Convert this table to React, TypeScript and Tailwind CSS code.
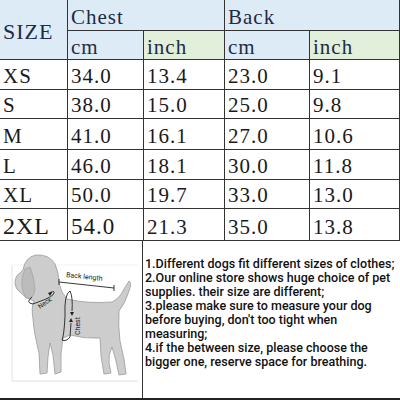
import React from 'react'

const rows = [
  { size: 'XS', c1: '34.0', c2: '13.4', b1: '23.0', b2: '9.1', h: 'h-[29px]' },
  { size: 'S', c1: '38.0', c2: '15.0', b1: '25.0', b2: '9.8', h: 'h-[28px]' },
  { size: 'M', c1: '41.0', c2: '16.1', b1: '27.0', b2: '10.6', h: 'h-[30px]' },
  { size: 'L', c1: '46.0', c2: '18.1', b1: '30.0', b2: '11.8', h: 'h-[29px]' },
  { size: 'XL', c1: '50.0', c2: '19.7', b1: '33.0', b2: '13.0', h: 'h-[28px]' },
  { size: '2XL', c1: '54.0', c2: '21.3', b1: '35.0', b2: '13.8', h: 'h-[31px]', big: true },
]

const serif = "font-['Liberation_Serif','DejaVu_Serif',serif]"

function DogFigure() {
  return (
    <svg viewBox="0 0 143 158" className="h-[158px] w-[143px]">
      {/* frame */}
      <line x1="12" y1="24" x2="12" y2="140" stroke="#e2e2e2" strokeWidth="1" />
      <line x1="12" y1="140" x2="138" y2="140" stroke="#e2e2e2" strokeWidth="1" />
      <line x1="12" y1="24" x2="138" y2="24" stroke="#f2f2f2" strokeWidth="1" />
      {/* dog body */}
      <path
        d="M15 42 Q15 35 20 32 L23 29 Q25 16 36 14 Q49 13 55 23 Q59 32 59 42 Q61 52 67 58 Q88 63 112 61 Q120 57 124 48 L129 40 Q132 42 129 50 Q125 63 119 70 Q118 85 120 100 L124 118 L126 133 L119 134 L116 120 L112 106 Q108 114 109 122 L111 132 L104 133 L101 115 L100 97 Q85 98 70 94 L63 97 Q60 112 61 131 L55 133 L53 114 L50 102 L48 116 L47 132 L40 133 L39 112 Q34 92 33 78 Q31 66 34 60 Q26 58 21 52 Q15 48 15 42 Z"
        fill="#cdcdcd"
        stroke="#9a9a9a"
        strokeWidth="0.8"
      />
      {/* ear */}
      <path d="M25 28 Q18 44 26 57 Q34 59 35 48 Q34 35 30 26 Z" fill="#bcbcbc" stroke="#9a9a9a" strokeWidth="0.6" />
      {/* dashed guide lines */}
      <path d="M58 60 L58 102" stroke="#d5d5d5" strokeWidth="0.8" strokeDasharray="2 2" fill="none" />
      <path d="M56 44 Q50 56 40 60" stroke="#d5d5d5" strokeWidth="0.8" strokeDasharray="2 2" fill="none" />
      {/* back length bracket */}
      <path d="M59 44 L59 38 M59 41 L114 47 M114 44 L114 50" stroke="#222" strokeWidth="0.9" fill="none" />
      <text x="66" y="36" fontSize="7" fill="#222" fontFamily="Roboto, Arial, sans-serif" transform="rotate(6 66 36)">
        Back length
      </text>
      {/* neck loop */}
      <path d="M32 56 Q25 62 33 63 L46 58 Q57 53 53 50" stroke="#222" strokeWidth="0.9" fill="none" />
      <path d="M48 52 L53 50 L50 55 Z" fill="#222" />
      <text x="40" y="68" fontSize="6.5" fill="#222" fontFamily="Roboto, Arial, sans-serif" transform="rotate(-35 40 68)">
        Neck
      </text>
      {/* chest loop */}
      <path d="M70 50 Q64 53 65 75 Q64 95 62 99 Q66 101 70 96 L71 82" stroke="#222" strokeWidth="0.9" fill="none" />
      <path d="M70 50 Q73 56 72 70" stroke="#222" strokeWidth="0.9" fill="none" />
      <path d="M70 71 L74 71 L72 75 Z" fill="#222" />
      <path d="M69 81 L73 81 L71 77 Z" fill="#222" />
      <text x="80" y="94" fontSize="7" fill="#222" fontFamily="Roboto, Arial, sans-serif" transform="rotate(-90 80 94)">
        Chest
      </text>
    </svg>
  )
}

export default function App() {
  const head = `flex pl-[3px] text-[21px] leading-none tracking-[1px] text-[#1f2a44] ${serif}`
  const cell = `flex items-end bg-white pl-[3px] pb-[2px] leading-none tracking-[1px] text-[#1a1a1a] ${serif}`

  return (
    <div className="h-[402px] w-[400px] bg-white">
      <div className="grid grid-cols-[67px_75px_80px_84px_89px] gap-px bg-[#333] pb-px pr-px">
        <div className={`row-span-2 flex items-center bg-[#ddebf7] pl-[3px] pt-[4px] text-[22px] leading-none tracking-[1px] text-[#1f2a44] ${serif}`}>
          SIZE
        </div>
        <div className={`${head} col-span-2 h-[30px] items-end bg-[#ddebf7] pb-[2px]`}>Chest</div>
        <div className={`${head} col-span-2 h-[30px] items-end bg-[#ddebf7] pb-[2px]`}>Back</div>
        <div className={`${head} h-[28px] items-end bg-[#ddebf7] pb-[1px]`}>cm</div>
        <div className={`${head} h-[28px] items-end bg-[#e2efda] pb-[1px]`}>inch</div>
        <div className={`${head} h-[28px] items-end bg-[#ddebf7] pb-[1px]`}>cm</div>
        <div className={`${head} h-[28px] items-end bg-[#e2efda] pb-[1px]`}>inch</div>
        {rows.map((r) => (
          <React.Fragment key={r.size}>
            <div className={`${cell} ${r.h} ${r.big ? 'text-[24px]' : 'text-[21px]'}`}>{r.size}</div>
            <div className={`${cell} ${r.h} ${r.big ? 'text-[23px]' : 'text-[21px]'}`}>{r.c1}</div>
            <div className={`${cell} ${r.h} text-[21px]`}>{r.c2}</div>
            <div className={`${cell} ${r.h} text-[21px]`}>{r.b1}</div>
            <div className={`${cell} ${r.h} text-[21px]`}>{r.b2}</div>
          </React.Fragment>
        ))}
      </div>
      <div className="flex h-[159px] border-b-2 border-[#222]">
        <div className="w-[143px] border-r border-[#333]">
          <DogFigure />
        </div>
        <div className="flex-1 pl-[2px] pt-[16px] font-['Roboto','Noto_Sans',sans-serif] text-[12.5px] font-medium leading-[14px] text-[#111]">
          <p>1.Different dogs fit different sizes of clothes;</p>
          <p>2.Our online store shows huge choice of pet supplies. their size are different;</p>
          <p>3.please make sure to measure your dog before buying, don't too tight when measuring;</p>
          <p>4.if the between size, please choose the bigger one, reserve space for breathing.</p>
        </div>
      </div>
    </div>
  )
}
